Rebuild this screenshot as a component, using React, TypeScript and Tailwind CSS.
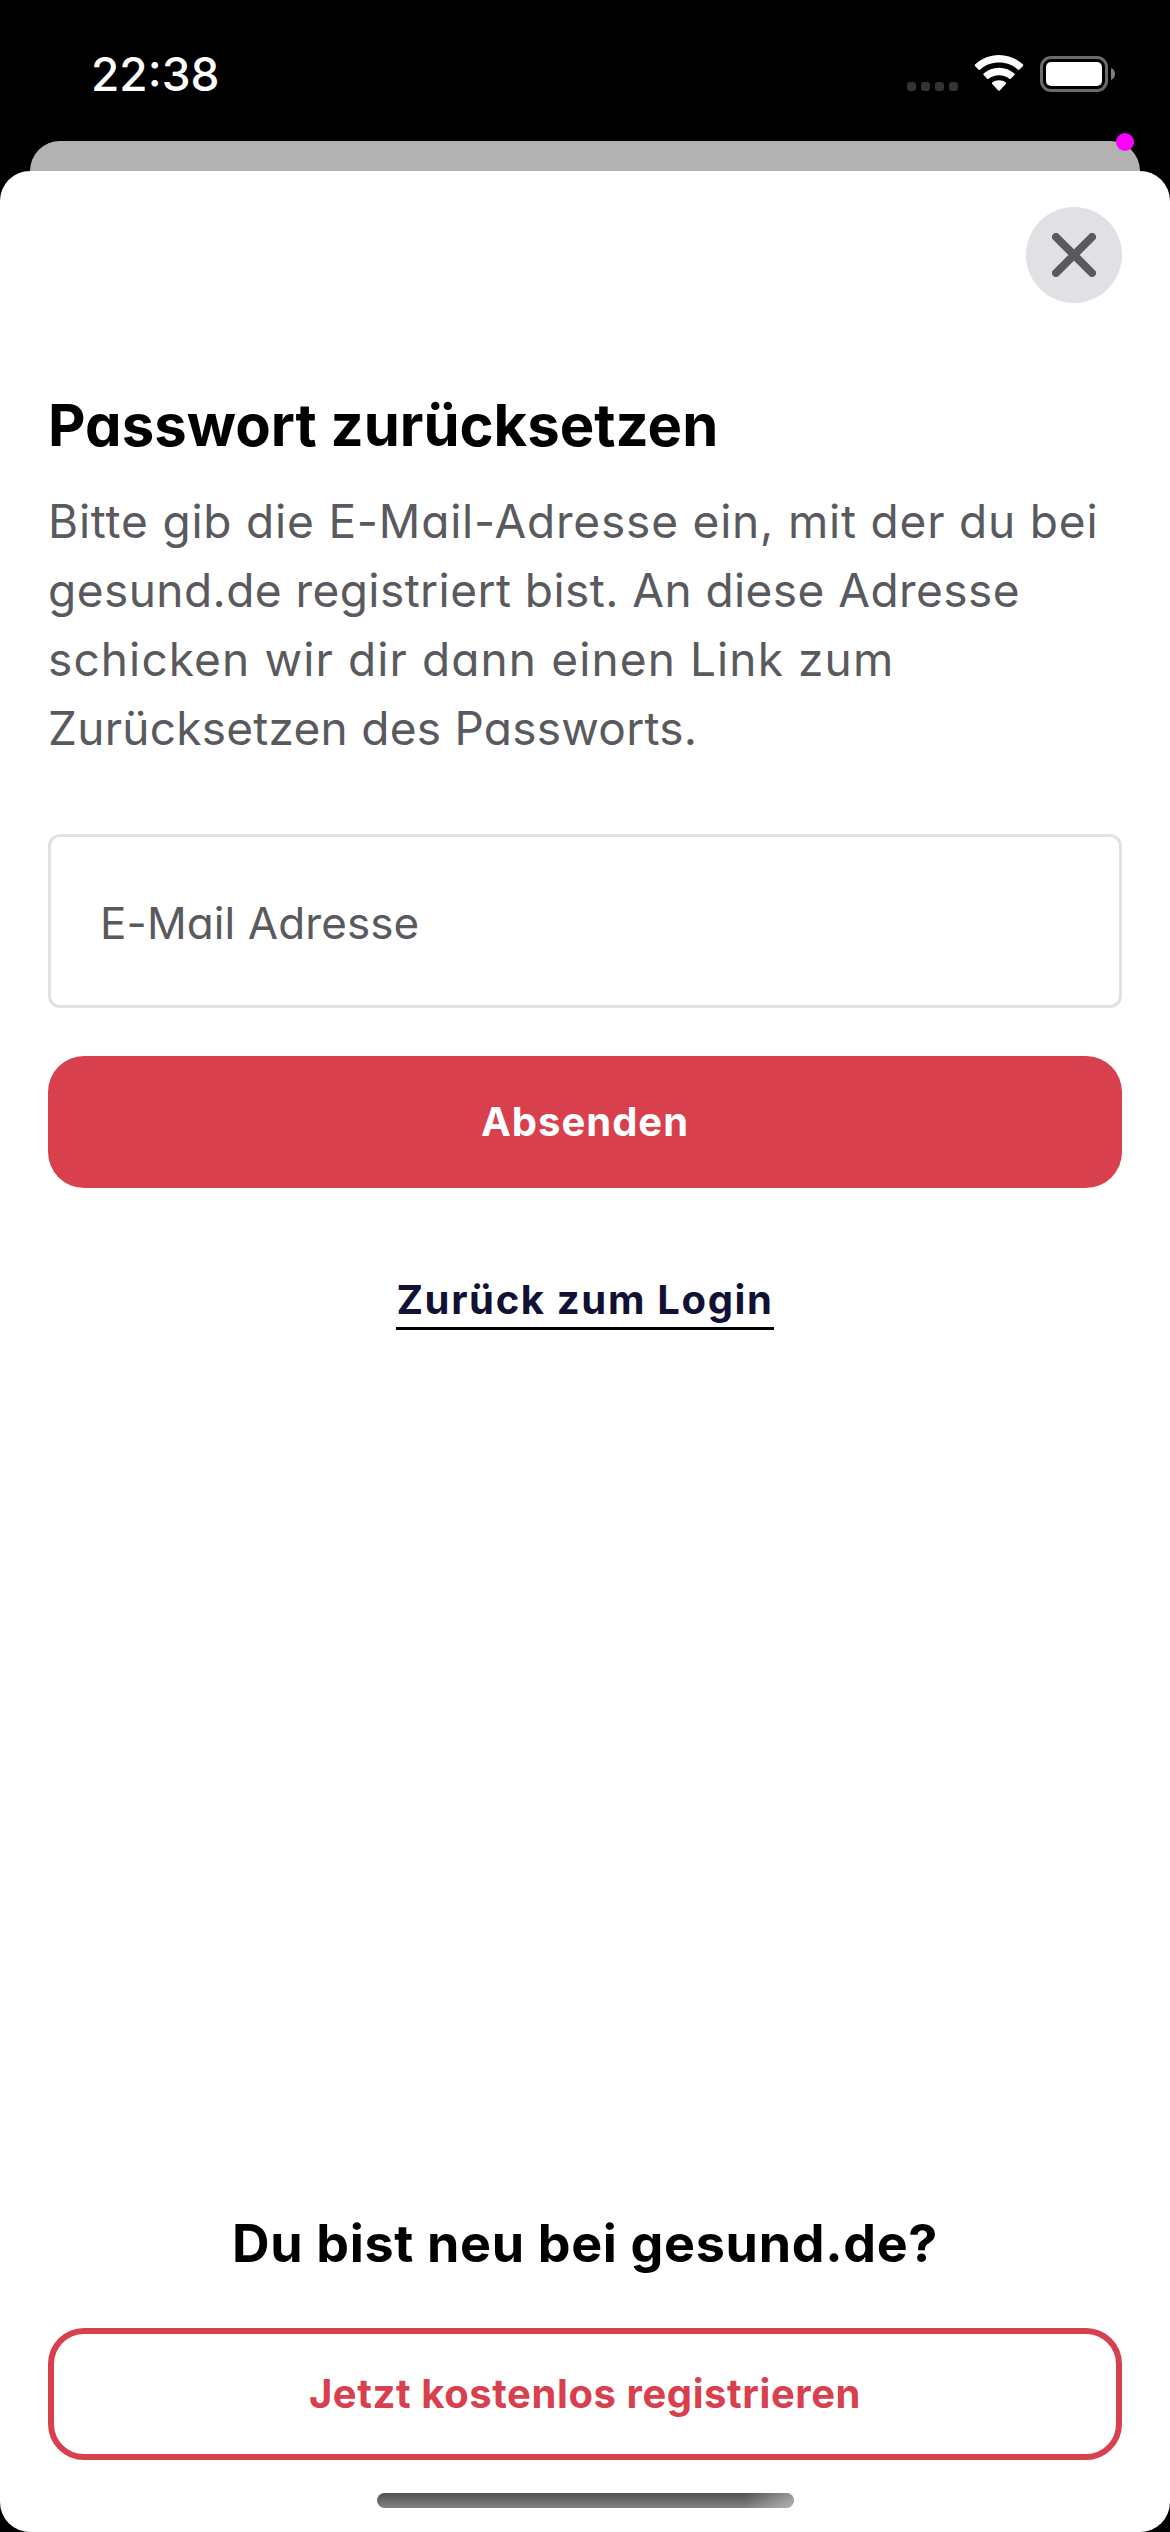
function StatusBar() {
  return (
    <header className="flex h-[141px] justify-between pr-[54px] pl-[91px]">
      <time className="mt-[46px] h-14 text-[46px] leading-[56px] font-medium whitespace-nowrap text-white">
        22:38
      </time>
      <div className="mt-[54px] flex h-10 items-start gap-4">
        <div className="mt-7 flex gap-[5px]">
          <i className="size-[9px] rounded-[3px] bg-[#333333]" />
          <i className="size-[9px] rounded-[3px] bg-[#333333]" />
          <i className="size-[9px] rounded-[3px] bg-[#333333]" />
          <i className="size-[9px] rounded-[3px] bg-[#333333]" />
        </div>
        <svg className="h-[38px] w-[50px]" viewBox="0 0 50 38" fill="white">
          <path d="M25 1C34.200 1 42.700 4.600 49 10.500C49.400 10.900 49.400 11.500 49 11.900L45.300 15.700C44.900 16.100 44.400 16.100 44 15.700C38.800 11 32.200 8.600 25 8.600S11.200 11 6 15.700C5.600 16.100 5.100 16.100 4.700 15.700L1 11.900C.6 11.500 .6 10.900 1 10.500C7.300 4.600 15.800 1 25 1Z" />
          <path d="M25 13.700C30.900 13.700 36.300 15.900 40.400 19.500C40.800 19.900 40.800 20.500 40.400 20.900L36.700 24.700C36.300 25.100 35.800 25.100 35.400 24.700C32.500 22.500 28.900 21.200 25 21.200S17.500 22.500 14.600 24.700C14.200 25.100 13.700 25.100 13.300 24.700L9.600 20.900C9.200 20.500 9.200 19.900 9.600 19.500C13.700 15.900 19.100 13.700 25 13.700Z" />
          <path d="M25 26.300C27.500 26.300 29.800 27.100 31.700 28.500C32.200 28.900 32.200 29.600 31.800 30.100L25.700 36.400C25.300 36.800 24.700 36.800 24.300 36.400L18.200 30.100C17.800 29.600 17.800 28.900 18.300 28.500C20.200 27.100 22.500 26.300 25 26.300Z" />
        </svg>
        <svg className="h-[38px] w-[76px]" viewBox="0 0 76 38">
          <rect x="1.500" y="3.500" width="65" height="33" rx="9.500" fill="none" stroke="#6b6b6b" strokeWidth="3" />
          <rect x="6" y="8" width="56" height="24" rx="5" fill="white" />
          <path d="M71 14C73.500 15 75 17.300 75 20S73.500 25 71 26Z" fill="#808080" />
        </svg>
      </div>
    </header>
  );
}

export default function App() {
  return (
    <div className="relative flex h-[2532px] w-[1170px] flex-col overflow-hidden bg-black font-['Inter',sans-serif] [font-feature-settings:'cv11']">
      <StatusBar />
      <div className="mx-[30px] h-[30px] shrink-0 rounded-t-[30px] bg-[#b2b2b2]" />
      <span className="absolute top-[133px] left-[1116px] size-[18px] rounded-full bg-[#ff00ff]" />

      <main className="flex grow flex-col rounded-[30px] bg-white px-12 pt-9">
        <button className="flex size-24 items-center justify-center self-end rounded-full bg-[#e1e0e5]" aria-label="Schließen">
          <svg className="size-11" viewBox="0 0 44 44" fill="none" stroke="#59595e" strokeWidth="8" strokeLinecap="round">
            <path d="M4 4L40 40M40 4L4 40" />
          </svg>
        </button>

        <h1 className="mt-[86px] h-[72px] text-[58px] leading-[72px] font-bold whitespace-nowrap text-black">
          Passwort zurücksetzen
        </h1>
        <p className="mt-[26px] flex flex-col items-start text-[46px] leading-[69px] whitespace-nowrap text-[#59595e]">
          <span className="tracking-[0.81px]">Bitte gib die E-Mail-Adresse ein, mit der du bei</span>
          <span className="tracking-[0.44px]">gesund.de registriert bist. An diese Adresse</span>
          <span className="tracking-[1.12px]">schicken wir dir dann einen Link zum</span>
          <span className="tracking-[0.25px]">Zurücksetzen des Passworts.</span>
        </p>

        <div className="mt-[71px] flex h-[174px] items-center rounded-xl border-3 border-[#e1e0e5] pt-1 pl-[49px] text-[44px] tracking-[0.1px] text-[#59595e]">
          <span>E-Mail Adresse</span>
        </div>
        <button className="mt-12 flex h-[132px] items-center justify-center rounded-[36px] bg-[#d9404e] text-[40px] font-bold tracking-[1px] text-white">
          <span>Absenden</span>
        </button>
        <a className="mt-[85px] h-[57px] self-center border-b-3 border-black text-[40px] leading-[54px] font-bold tracking-[1.65px] whitespace-nowrap text-[#111135]">
          Zurück zum Login
        </a>

        <h2 className="mt-auto text-center text-[52px] leading-[64px] font-bold tracking-[0.68px] whitespace-nowrap text-black">
          Du bist neu bei gesund.de?
        </h2>
        <button className="mt-[52px] flex h-[132px] items-center justify-center rounded-[36px] border-6 border-[#d9404e] text-[40px] font-bold tracking-[0.58px] text-[#d9404e]">
          <span>Jetzt kostenlos registrieren</span>
        </button>
        <div className="mt-[33px] mb-6 flex h-[15px] w-[417px] justify-end self-center overflow-hidden rounded-full bg-linear-to-b from-[#505050] to-[#828282]">
          <div className="h-full w-[50px] bg-linear-to-r from-white/0 to-white/40" />
        </div>
      </main>
    </div>
  );
}
